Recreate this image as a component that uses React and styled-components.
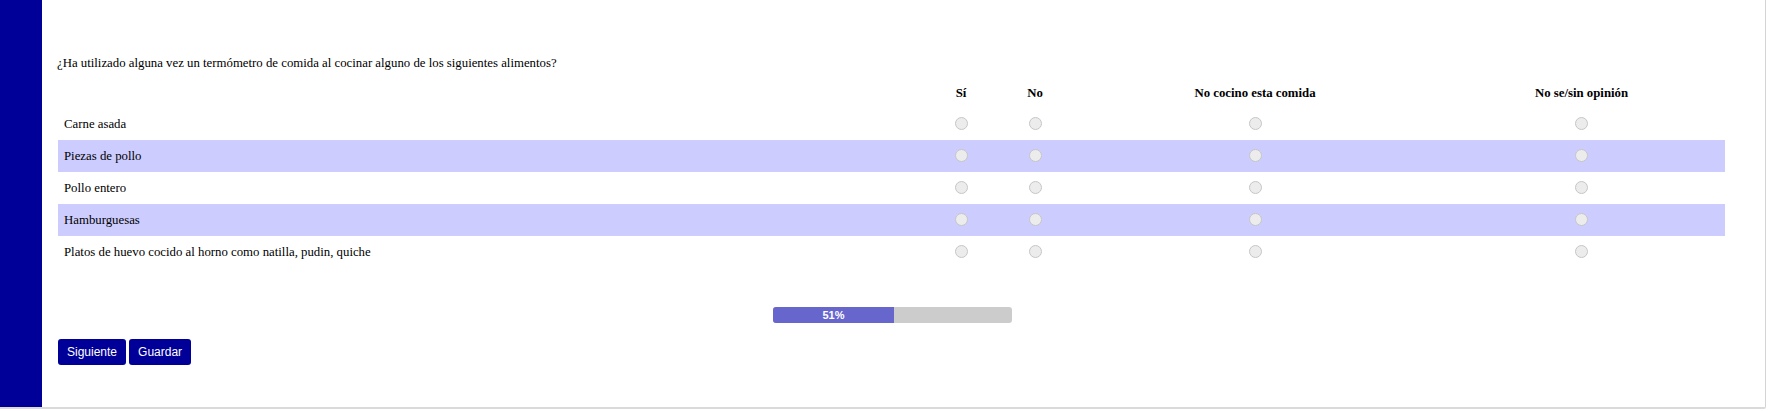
import styled, { createGlobalStyle } from "styled-components";

const Global = createGlobalStyle`
  body {
    margin: 0;
    background: #ffffff;
    font-family: "Liberation Serif", "Times New Roman", serif;
  }
`;

const Page = styled.div`
  display: flex;
  width: 1765px;
  height: 407px;
  border-right: 1px solid #d4d4d4;
  border-bottom: 2px solid #dadada;
  border-bottom-right-radius: 2px;
  background: #ffffff;
`;

const Sidebar = styled.div`
  width: 42px;
  flex-shrink: 0;
  background: #000099;
`;

const Main = styled.div`
  flex: 1;
  padding: 56px 39px 0 16px;
  display: flex;
  flex-direction: column;
`;

const Question = styled.p`
  margin: 0 0 0 -1px;
  font-size: 12.8px;
  line-height: 15px;
  color: #000000;
`;

const Table = styled.table`
  width: 1667px;
  margin-top: 8px;
  border-collapse: collapse;
  table-layout: fixed;
  font-size: 12.8px;
`;

const Th = styled.th`
  height: 29px;
  padding: 0;
  font-weight: bold;
  text-align: center;
  vertical-align: middle;
  color: #000000;
`;

const Row = styled.tr`
  height: 32px;
  background: ${(p) => (p.$striped ? "#ccccff" : "transparent")};
`;

const Label = styled.td`
  padding: 0 6px;
  color: #000000;
  vertical-align: middle;
`;

const Cell = styled.td`
  text-align: center;
  vertical-align: middle;
  padding: 0;
`;

const Radio = styled.input.attrs({ type: "radio" })`
  appearance: none;
  width: 13px;
  height: 13px;
  margin: 3px 0 0 0;
  border-radius: 50%;
  border: 1px solid #c6c6c6;
  background: #ececec;
  box-sizing: border-box;
`;

const Progress = styled.div`
  width: 239px;
  height: 16px;
  margin: 39px auto 0;
  background: #cccccc;
  border-radius: 3px;
  overflow: hidden;
  display: flex;
`;

const Fill = styled.div`
  height: 100%;
  background: #6666cc;
  color: #ffffff;
  font-family: "Liberation Sans", Arial, sans-serif;
  font-size: 11px;
  font-weight: bold;
  line-height: 16px;
  text-align: center;
`;

const Buttons = styled.div`
  display: flex;
  gap: 3px;
  margin-top: 16px;
`;

const Button = styled.button`
  height: 26px;
  padding: 0 9px;
  border: none;
  border-radius: 3px;
  background: #000099;
  color: #ffffff;
  font-family: "Liberation Sans", Arial, sans-serif;
  font-size: 12px;
  cursor: pointer;
`;

const columns = [
  { title: "Sí", width: 74 },
  { title: "No", width: 74 },
  { title: "No cocino esta comida", width: 366 },
  { title: "No se/sin opinión", width: 287 },
];

const foods = [
  "Carne asada",
  "Piezas de pollo",
  "Pollo entero",
  "Hamburguesas",
  "Platos de huevo cocido al horno como natilla, pudin, quiche",
];

export default function App() {
  const progress = 51;
  return (
    <>
      <Global />
      <Page>
        <Sidebar />
        <Main>
          <Question>
            ¿Ha utilizado alguna vez un termómetro de comida al cocinar alguno de los siguientes alimentos?
          </Question>
          <Table>
            <colgroup>
              <col />
              {columns.map((c) => (
                <col key={c.title} style={{ width: c.width }} />
              ))}
            </colgroup>
            <thead>
              <tr>
                <Th />
                {columns.map((c) => (
                  <Th key={c.title}>{c.title}</Th>
                ))}
              </tr>
            </thead>
            <tbody>
              {foods.map((food, i) => (
                <Row key={food} $striped={i % 2 === 1}>
                  <Label>{food}</Label>
                  {columns.map((c) => (
                    <Cell key={c.title}>
                      <Radio name={`q${i}`} />
                    </Cell>
                  ))}
                </Row>
              ))}
            </tbody>
          </Table>
          <Progress>
            <Fill style={{ width: `${progress}%` }}>{progress}%</Fill>
          </Progress>
          <Buttons>
            <Button>Siguiente</Button>
            <Button>Guardar</Button>
          </Buttons>
        </Main>
      </Page>
    </>
  );
}
